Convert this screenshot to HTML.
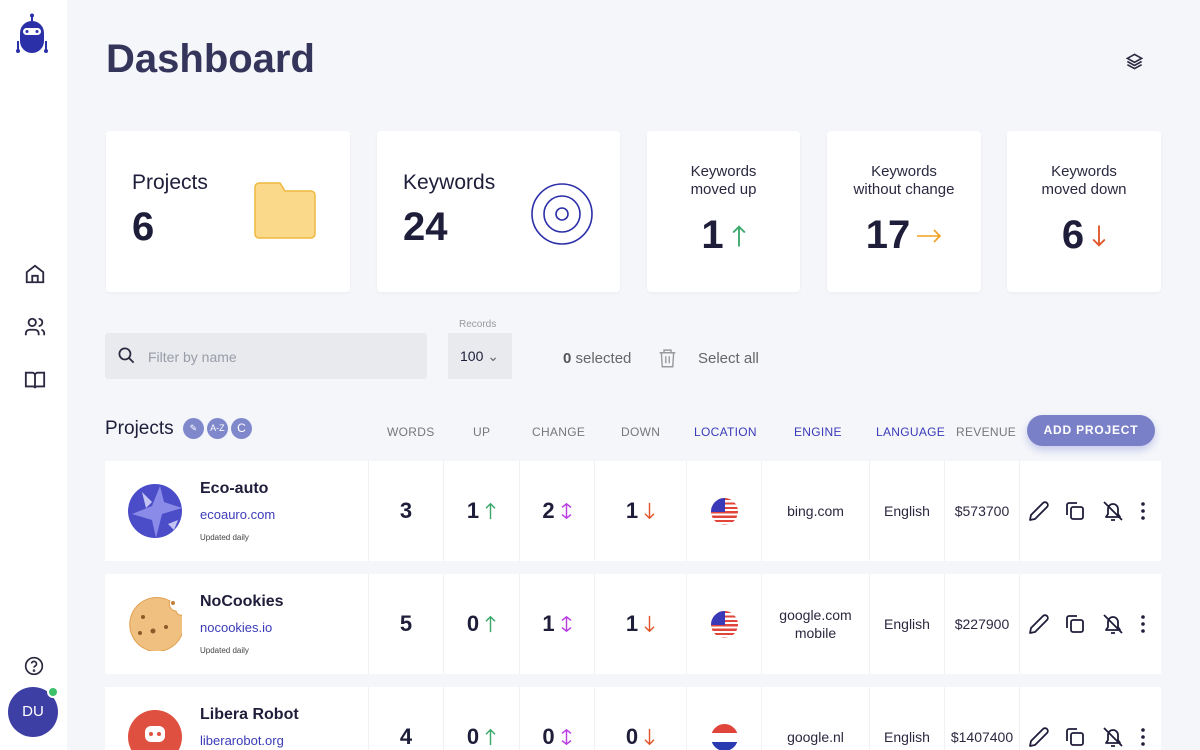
<!DOCTYPE html>
<html><head><meta charset="utf-8"><style>
*{box-sizing:border-box;margin:0;padding:0}
html,body{width:1200px;height:750px;overflow:hidden}
body{background:#f4f6fa;font-family:"Liberation Sans",sans-serif;color:#1e1d3a;position:relative}
.side{position:absolute;left:0;top:0;width:67px;height:750px;background:#fff}
.abs{position:absolute}
.card{position:absolute;background:#fff;border-radius:4px;top:131px;height:161px;box-shadow:0 1px 3px rgba(0,0,0,.04)}
.sm{text-align:center;font-size:15px;color:#2a2940;line-height:18px}
.big{font-weight:bold;font-size:40px;color:#1e1d3a;vertical-align:middle}
.hdr{position:absolute;top:425px;font-size:12px;color:#777;letter-spacing:.3px}
.blue{color:#3b3bb8}
.row{position:absolute;left:105px;width:1056px;height:100px;background:#fff}
.c{position:absolute;top:0;height:100px;border-left:1px solid #f0f1f4;display:flex;align-items:center;justify-content:center;font-size:14px;color:#2a2940;text-align:center;line-height:18px}
.n{font-weight:bold;font-size:22px;color:#1e1d3a}
.ar{margin-left:6px}
.pill{display:inline-block;width:21px;height:21px;border-radius:50%;background:#8088cc;color:#fff;font-size:9px;text-align:center;line-height:21px;vertical-align:middle;margin-left:3px}
.act{justify-content:space-around;padding:0 4px}
</style></head><body>
<svg width="0" height="0" style="position:absolute"><defs>
<symbol id="up" viewBox="0 0 12 20"><path d="M6 19V2M1 7l5-5 5 5" fill="none" stroke="currentColor" stroke-width="1.6"/></symbol>
<symbol id="dn" viewBox="0 0 12 20"><path d="M6 1v17M1 13l5 5 5-5" fill="none" stroke="currentColor" stroke-width="1.6"/></symbol>
<symbol id="ud" viewBox="0 0 12 20"><path d="M6 2v16M1 6l5-4 5 4M1 14l5 4 5-4" fill="none" stroke="currentColor" stroke-width="1.6"/></symbol>
<symbol id="acts" viewBox="0 0 130 24"><g fill="none" stroke="#1e1d3a" stroke-width="1.8" stroke-linejoin="round"><path d="M4 21l1-5L17 4a2.5 2.5 0 014 4L9 20z"/><rect x="45" y="8" width="12" height="12" rx="2"/><path d="M41 16V6a2 2 0 012-2h8"/><path d="M80 18h14l-2-3v-5a5 5 0 00-10 0v5zM85 21h4M78 3l18 18"/></g><g fill="#1e1d3a"><circle cx="117" cy="5" r="1.8"/><circle cx="117" cy="12" r="1.8"/><circle cx="117" cy="19" r="1.8"/></g></symbol>
</defs></svg>
<div class="side"></div>
<svg class="abs" style="left:15px;top:13px" width="36" height="45" viewBox="0 0 36 45"><circle cx="17" cy="2.5" r="2" fill="#2b2fa8"/><rect x="16" y="3" width="2" height="6" fill="#2b2fa8"/><path d="M5 20a12 12 0 0124 0v8a12 12 0 01-24 0z" fill="#2b2fa8"/><rect x="8" y="15" width="18" height="7" rx="3.5" fill="#fff"/><circle cx="12" cy="18.5" r="1.5" fill="#2b2fa8"/><circle cx="22" cy="18.5" r="1.5" fill="#2b2fa8"/><rect x="2" y="28" width="2" height="10" fill="#2b2fa8"/><rect x="30" y="28" width="2" height="10" fill="#2b2fa8"/><circle cx="3" cy="38" r="2" fill="#2b2fa8"/><circle cx="31" cy="38" r="2" fill="#2b2fa8"/></svg>
<svg class="abs" style="left:24px;top:263px" width="22" height="22" viewBox="0 0 24 24" fill="none" stroke="#2a2940" stroke-width="2"><path d="M3 10l9-7 9 7v11H3z M9 21v-7h6v7"/></svg>
<svg class="abs" style="left:24px;top:316px" width="22" height="22" viewBox="0 0 24 24" fill="none" stroke="#2a2940" stroke-width="2"><circle cx="9" cy="7" r="4"/><path d="M2 21v-2a4 4 0 014-4h6a4 4 0 014 4v2M16 3a4 4 0 010 8M22 21v-2a4 4 0 00-3-4"/></svg>
<svg class="abs" style="left:24px;top:369px" width="22" height="22" viewBox="0 0 24 24" fill="none" stroke="#2a2940" stroke-width="2"><path d="M2 4h7a3 3 0 013 3v14a2 2 0 00-2-2H2zM22 4h-7a3 3 0 00-3 3v14a2 2 0 012-2h8z"/></svg>
<svg class="abs" style="left:24px;top:656px" width="20" height="20" viewBox="0 0 24 24" fill="none" stroke="#2a2940" stroke-width="2"><circle cx="12" cy="12" r="10"/><path d="M9 9a3 3 0 016 1c0 2-3 2-3 4"/><circle cx="12" cy="17.5" r=".6"/></svg>
<div class="abs" style="left:8px;top:687px;width:50px;height:50px;border-radius:50%;background:#3d3fa4;color:#fff;font-size:15px;text-align:center;line-height:50px">DU</div>
<div class="abs" style="left:47px;top:686px;width:12px;height:12px;border-radius:50%;background:#3cc06a;border:2px solid #fff"></div>

<div class="abs" style="left:106px;top:37px;font-size:40px;font-weight:bold;color:#35345a">Dashboard</div>
<svg class="abs" style="left:1125px;top:52px" width="19" height="19" viewBox="0 0 24 24" fill="none" stroke="#2a2940" stroke-width="2"><path d="M12 3l9 5-9 5-9-5z M3 12l9 5 9-5 M3 16l9 5 9-5"/></svg>

<div class="card" style="left:106px;width:244px"><div class="abs" style="left:26px;top:40px;font-size:21px">Projects</div><div class="abs big" style="left:26px;top:74px">6</div>
<svg class="abs" style="left:148px;top:51px" width="62" height="57" viewBox="0 0 62 57"><path d="M1 5a4 4 0 014-4h21l5 8h26a4 4 0 014 4v39a4 4 0 01-4 4H5a4 4 0 01-4-4z" fill="#fad98a" stroke="#f0b840" stroke-width="1.5"/></svg></div>
<div class="card" style="left:377px;width:243px"><div class="abs" style="left:26px;top:40px;font-size:21px">Keywords</div><div class="abs big" style="left:26px;top:74px">24</div>
<svg class="abs" style="left:153px;top:51px" width="64" height="64" viewBox="0 0 64 64" fill="none" stroke="#2b2fa8" stroke-width="1.6"><circle cx="32" cy="32" r="30"/><circle cx="32" cy="32" r="18"/><circle cx="32" cy="32" r="6"/></svg></div>
<div class="card" style="left:647px;width:153px"><div class="abs sm" style="left:0;width:153px;top:32px">Keywords<br>moved up</div><div class="abs" style="left:0;width:153px;top:82px;text-align:center"><span class="big">1</span><svg style="margin-left:8px;vertical-align:middle;color:#3aa86b" width="14" height="26"><use href="#up"/></svg></div></div>
<div class="card" style="left:827px;width:154px"><div class="abs sm" style="left:0;width:154px;top:32px">Keywords<br>without change</div><div class="abs" style="left:0;width:154px;top:82px;text-align:center"><span class="big">17</span><svg style="margin-left:6px;vertical-align:middle" width="26" height="14" viewBox="0 0 26 14"><path d="M1 7h23M18 1l6 6-6 6" fill="none" stroke="#f0a020" stroke-width="1.6"/></svg></div></div>
<div class="card" style="left:1007px;width:154px"><div class="abs sm" style="left:0;width:154px;top:32px">Keywords<br>moved down</div><div class="abs" style="left:0;width:154px;top:82px;text-align:center"><span class="big">6</span><svg style="margin-left:8px;vertical-align:middle;color:#e0562a" width="14" height="26"><use href="#dn"/></svg></div></div>

<div class="abs" style="left:105px;top:333px;width:322px;height:46px;background:#e8eaee;border-radius:3px"></div>
<svg class="abs" style="left:117px;top:346px" width="19" height="19" viewBox="0 0 24 24" fill="none" stroke="#2a2940" stroke-width="2.2"><circle cx="10" cy="10" r="7"/><path d="M15 15l6 6"/></svg>
<div class="abs" style="left:148px;top:349px;font-size:14px;color:#9a9ca8">Filter by name</div>
<div class="abs" style="left:459px;top:319px;font-size:10px;color:#999">Records</div>
<div class="abs" style="left:448px;top:333px;width:64px;height:46px;background:#e8eaee;font-size:14px;padding:15px 0 0 12px">100 <span style="color:#666">⌄</span></div>
<div class="abs" style="left:563px;top:350px;font-size:15px;color:#666"><b style="color:#555">0</b> selected</div>
<svg class="abs" style="left:657px;top:347px" width="21" height="22" viewBox="0 0 24 24" fill="none" stroke="#999" stroke-width="1.6"><path d="M3 6h18M8 6V3h8v3M5 6l1 16h12l1-16M10 10v8M14 10v8"/></svg>
<div class="abs" style="left:698px;top:350px;font-size:15px;color:#666">Select all</div>

<div class="abs" style="left:105px;top:418px;font-size:19px;color:#1e1d3a">Projects <span class="pill" style="margin-left:4px">✎</span><span class="pill">A-Z</span><span class="pill" style="font-size:12px">C</span></div>
<div class="hdr" style="left:387px">WORDS</div><div class="hdr" style="left:473px">UP</div><div class="hdr" style="left:532px">CHANGE</div><div class="hdr" style="left:621px">DOWN</div>
<div class="hdr blue" style="left:694px">LOCATION</div><div class="hdr blue" style="left:794px">ENGINE</div><div class="hdr blue" style="left:876px">LANGUAGE</div><div class="hdr" style="left:956px">REVENUE</div>
<div class="abs" style="left:1027px;top:415px;width:128px;height:31px;border-radius:16px;background:#7a80c8;color:#fff;font-size:12px;font-weight:bold;letter-spacing:.8px;text-align:center;line-height:31px;box-shadow:0 4px 8px rgba(90,100,200,.3)">ADD PROJECT</div>

<div class="row" style="top:461px">
<svg class="abs" style="left:23px;top:23px" width="54" height="54" viewBox="0 0 54 54"><circle cx="27" cy="27" r="27" fill="#4b4dc8"/><path d="M4 30l20-8 8-20 4 16 18 6-20 6-6 24-4-18z" fill="#8a8ae8"/><path d="M14 8l10 10-6 6z M40 40l10-4-4 10z" fill="#c4c4f4"/></svg>
<div class="abs" style="left:95px;top:19px;font-size:16px;font-weight:bold">Eco-auto</div><div class="abs blue" style="left:95px;top:46px;font-size:13px">ecoauro.com</div><div class="abs" style="left:95px;top:72px;font-size:8px;color:#444">Updated daily</div>
<div class="c" style="left:263px;width:75px"><span class="n">3</span></div><div class="c" style="left:338px;width:76px"><span class="n">1</span><svg class="ar" style="color:#3aa86b" width="11" height="18"><use href="#up"/></svg></div><div class="c" style="left:414px;width:75px"><span class="n">2</span><svg class="ar" style="color:#b83ee0" width="11" height="18"><use href="#ud"/></svg></div><div class="c" style="left:489px;width:92px"><span class="n">1</span><svg class="ar" style="color:#e0562a" width="11" height="18"><use href="#dn"/></svg></div>
<div class="c" style="left:581px;width:75px"><span style="width:27px;height:27px;border-radius:50%;background:repeating-linear-gradient(#e0443a 0 2.2px,#fff 2.2px 4.4px);position:relative;overflow:hidden"><span style="position:absolute;left:0;top:0;width:14px;height:14px;background:#3a3ab8"></span></span></div>
<div class="c" style="left:656px;width:108px">bing.com</div><div class="c" style="left:764px;width:75px">English</div><div class="c" style="left:839px;width:75px">$573700</div>
<div class="c act" style="left:914px;width:142px"><svg width="130" height="24"><use href="#acts"/></svg></div>
</div>
<div class="row" style="top:574px">
<svg class="abs" style="left:23px;top:23px" width="54" height="54" viewBox="0 0 54 54"><path d="M54 18a27 27 0 11-12-14a7 7 0 006 10a5 5 0 006 4z" fill="#f0c080" stroke="#e0a050"/><circle cx="15" cy="20" r="2" fill="#8a5a2a"/><circle cx="25" cy="34" r="2.5" fill="#8a5a2a"/><circle cx="12" cy="36" r="2" fill="#8a5a2a"/><circle cx="38" cy="30" r="2" fill="#8a5a2a"/><circle cx="45" cy="6" r="2" fill="#c08040"/></svg>
<div class="abs" style="left:95px;top:19px;font-size:16px;font-weight:bold">NoCookies</div><div class="abs blue" style="left:95px;top:46px;font-size:13px">nocookies.io</div><div class="abs" style="left:95px;top:72px;font-size:8px;color:#444">Updated daily</div>
<div class="c" style="left:263px;width:75px"><span class="n">5</span></div><div class="c" style="left:338px;width:76px"><span class="n">0</span><svg class="ar" style="color:#3aa86b" width="11" height="18"><use href="#up"/></svg></div><div class="c" style="left:414px;width:75px"><span class="n">1</span><svg class="ar" style="color:#b83ee0" width="11" height="18"><use href="#ud"/></svg></div><div class="c" style="left:489px;width:92px"><span class="n">1</span><svg class="ar" style="color:#e0562a" width="11" height="18"><use href="#dn"/></svg></div>
<div class="c" style="left:581px;width:75px"><span style="width:27px;height:27px;border-radius:50%;background:repeating-linear-gradient(#e0443a 0 2.2px,#fff 2.2px 4.4px);position:relative;overflow:hidden"><span style="position:absolute;left:0;top:0;width:14px;height:14px;background:#3a3ab8"></span></span></div>
<div class="c" style="left:656px;width:108px">google.com<br>mobile</div><div class="c" style="left:764px;width:75px">English</div><div class="c" style="left:839px;width:75px">$227900</div>
<div class="c act" style="left:914px;width:142px"><svg width="130" height="24"><use href="#acts"/></svg></div>
</div>
<div class="row" style="top:687px">
<svg class="abs" style="left:23px;top:23px" width="54" height="54" viewBox="0 0 54 54"><circle cx="27" cy="27" r="27" fill="#e05040"/><rect x="17" y="16" width="20" height="16" rx="6" fill="#fff"/><circle cx="23" cy="24" r="2" fill="#e05040"/><circle cx="31" cy="24" r="2" fill="#e05040"/></svg>
<div class="abs" style="left:95px;top:19px;font-size:16px;font-weight:bold">Libera Robot</div><div class="abs blue" style="left:95px;top:46px;font-size:13px">liberarobot.org</div>
<div class="c" style="left:263px;width:75px"><span class="n">4</span></div><div class="c" style="left:338px;width:76px"><span class="n">0</span><svg class="ar" style="color:#3aa86b" width="11" height="18"><use href="#up"/></svg></div><div class="c" style="left:414px;width:75px"><span class="n">0</span><svg class="ar" style="color:#b83ee0" width="11" height="18"><use href="#ud"/></svg></div><div class="c" style="left:489px;width:92px"><span class="n">0</span><svg class="ar" style="color:#e0562a" width="11" height="18"><use href="#dn"/></svg></div>
<div class="c" style="left:581px;width:75px"><span style="width:27px;height:27px;border-radius:50%;background:linear-gradient(#e0443a 0 33%,#fff 33% 66%,#2a3ab0 66%)"></span></div>
<div class="c" style="left:656px;width:108px">google.nl</div><div class="c" style="left:764px;width:75px">English</div><div class="c" style="left:839px;width:75px">$1407400</div>
<div class="c act" style="left:914px;width:142px"><svg width="130" height="24"><use href="#acts"/></svg></div>
</div>
</body></html>
